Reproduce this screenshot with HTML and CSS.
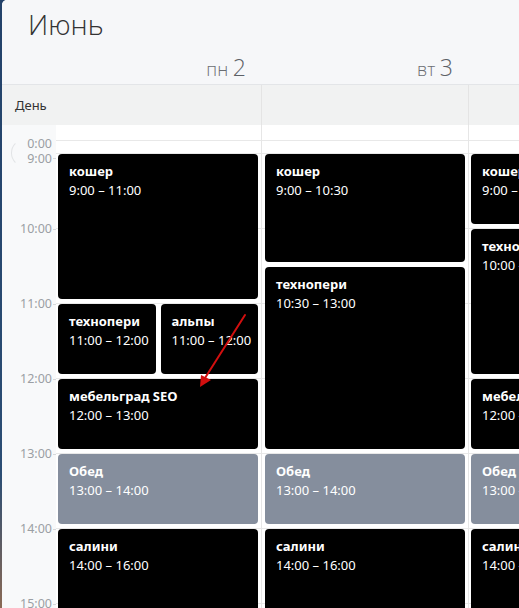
FILE: index.html
```html
<!DOCTYPE html>
<html lang="ru">

<head>
    <meta charset="UTF-8">
    <title>Календарь</title>
    <link rel="stylesheet" href="styles.css">
</head>

<body>
    <div class="app">
        <header class="cal-head">
            <h1 class="month">Июнь</h1>
            <div class="day-heads">
                <div class="head-gutter"></div>
                <div class="day-head">пн <span class="day-num">2</span></div>
                <div class="day-head wide">вт <span class="day-num">3</span></div>
                <div class="day-head"></div>
            </div>
        </header>

        <div class="allday">
            <div class="allday-label">День</div>
            <div class="allday-cell"></div>
            <div class="allday-cell wide"></div>
            <div class="allday-cell"></div>
        </div>

        <div class="grid">
            <div class="gutter">
                <div class="gutter-top">
                    <span class="round-btn"></span>
                    <div class="time">0:00</div>
                    <div class="time">9:00<i class="tick"></i></div>
                </div>
                <div class="hour">10:00<i class="tick"></i></div>
                <div class="hour">11:00<i class="tick"></i></div>
                <div class="hour">12:00<i class="tick"></i></div>
                <div class="hour">13:00<i class="tick"></i></div>
                <div class="hour">14:00<i class="tick"></i></div>
                <div class="hour">15:00<i class="tick"></i></div>
            </div>

            <!-- пн 2 -->
            <div class="day-col">
                <div class="pre"></div>
                <div class="slots">
                    <div class="event" style="grid-row: 1 / 5; grid-column: 1 / 3">
                        <b>кошер</b><span>9:00 – 11:00</span>
                    </div>
                    <div class="event" style="grid-row: 5 / 7; grid-column: 1 / 2">
                        <b>технопери</b><span>11:00 – 12:00</span>
                    </div>
                    <div class="event" style="grid-row: 5 / 7; grid-column: 2 / 3">
                        <b>альпы</b><span>11:00 – 12:00</span>
                    </div>
                    <div class="event" style="grid-row: 7 / 9; grid-column: 1 / 3">
                        <b>мебельград SEO</b><span>12:00 – 13:00</span>
                    </div>
                    <div class="event lunch" style="grid-row: 9 / 11; grid-column: 1 / 3">
                        <b>Обед</b><span>13:00 – 14:00</span>
                    </div>
                    <div class="event" style="grid-row: 11 / 15; grid-column: 1 / 3">
                        <b>салини</b><span>14:00 – 16:00</span>
                    </div>
                </div>
            </div>

            <!-- вт 3 -->
            <div class="day-col wide">
                <div class="pre"></div>
                <div class="slots">
                    <div class="event" style="grid-row: 1 / 4; grid-column: 1 / 3">
                        <b>кошер</b><span>9:00 – 10:30</span>
                    </div>
                    <div class="event" style="grid-row: 4 / 9; grid-column: 1 / 3">
                        <b>технопери</b><span>10:30 – 13:00</span>
                    </div>
                    <div class="event lunch" style="grid-row: 9 / 11; grid-column: 1 / 3">
                        <b>Обед</b><span>13:00 – 14:00</span>
                    </div>
                    <div class="event" style="grid-row: 11 / 15; grid-column: 1 / 3">
                        <b>салини</b><span>14:00 – 16:00</span>
                    </div>
                </div>
            </div>

            <!-- ср 4 -->
            <div class="day-col">
                <div class="pre"></div>
                <div class="slots">
                    <div class="event" style="grid-row: 1 / 3; grid-column: 1 / 3">
                        <b>кошер</b><span>9:00 – 10:00</span>
                    </div>
                    <div class="event" style="grid-row: 3 / 7; grid-column: 1 / 3">
                        <b>технопери</b><span>10:00 – 12:00</span>
                    </div>
                    <div class="event" style="grid-row: 7 / 9; grid-column: 1 / 3">
                        <b>мебельград SEO</b><span>12:00 – 13:00</span>
                    </div>
                    <div class="event lunch" style="grid-row: 9 / 11; grid-column: 1 / 3">
                        <b>Обед</b><span>13:00 – 14:00</span>
                    </div>
                    <div class="event" style="grid-row: 11 / 15; grid-column: 1 / 3">
                        <b>салини</b><span>14:00 – 16:00</span>
                    </div>
                </div>
            </div>
        </div>

        <!-- red annotation arrow -->
        <svg class="arrow" width="519" height="608" viewBox="0 0 519 608">
            <line x1="245" y1="315" x2="205" y2="378" stroke="#d20f0f" stroke-width="2" stroke-linecap="round" />
            <polygon points="200,387 201,375 211,380" fill="#d20f0f" />
        </svg>
    </div>
</body>

</html>
```

FILE: styles.css
```css
/* General styles */
html,
body {
    margin: 0;
    padding: 0;
    height: 100%;
    overflow: hidden;
}

body {
    background: linear-gradient(180deg, #23426a 0%, #2c4e74 78%, #8a6a55 100%);
    font-family: 'Noto Sans', 'Open Sans', sans-serif;
}

.app {
    position: relative;
    margin-left: 2px;
    height: 100%;
    background: #ffffff;
    border-top-left-radius: 5px;
    overflow: hidden;
}

/* Header */
.cal-head {
    background: #f6f7f9;
    height: 85px;
    border-bottom: 1px solid #e3e5e8;
    box-sizing: border-box;
}

.month {
    margin: 0;
    padding: 4px 0 0 26px;
    font-family: 'Open Sans', sans-serif;
    font-size: 28px;
    font-weight: 300;
    line-height: 40px;
    color: #333333;
}

.day-heads {
    display: flex;
    margin-top: 10px;
}

.head-gutter {
    width: 54px;
    flex: none;
}

.day-head {
    width: 206px;
    flex: none;
    box-sizing: border-box;
    padding-right: 16px;
    text-align: right;
    font-family: 'Open Sans', sans-serif;
    font-size: 18px;
    font-weight: 300;
    color: #6a6d72;
    line-height: 26px;
}

.day-num {
    font-size: 23px;
    color: #5c6066;
}

/* All-day row */
.allday {
    display: flex;
    height: 40px;
    background: #f1f2f2;
}

.allday-label {
    width: 54px;
    flex: none;
    padding-left: 13px;
    box-sizing: border-box;
    font-size: 13px;
    line-height: 40px;
    color: #333333;
}

.allday-cell {
    width: 206px;
    flex: none;
    border-right: 1px solid #e4e4e4;
    box-sizing: border-box;
}

/* Time grid */
.grid {
    display: flex;
}

.gutter {
    width: 54px;
    flex: none;
    background: #f8f9fa;
    font-size: 12.5px;
    color: #9b9fa4;
}

.gutter-top {
    position: relative;
    height: 96px;
    padding-top: 11px;
    box-sizing: border-box;
}

.time,
.hour {
    display: flex;
    justify-content: flex-end;
    align-items: center;
    line-height: 15px;
}

.hour {
    height: 75px;
    align-items: flex-start;
}

.tick {
    display: block;
    width: 3px;
    height: 1px;
    margin-left: 1px;
    align-self: center;
    background: #d6d8db;
}

.hour .tick {
    align-self: flex-start;
    margin-top: 8px;
}

.time:first-of-type {
    padding-right: 4px;
}

.round-btn {
    position: absolute;
    left: 9px;
    top: 14px;
    width: 28px;
    height: 28px;
    border-radius: 50%;
    border: 1px solid #e2e4e6;
    border-right-color: transparent;
    border-top-color: transparent;
    border-bottom-color: transparent;
    box-sizing: border-box;
}

.day-col {
    width: 206px;
    flex: none;
    border-right: 1px solid #e6e6e6;
    box-sizing: border-box;
}

.day-head.wide,
.allday-cell.wide,
.day-col.wide {
    width: 207px;
}

.pre {
    height: 15px;
    border-bottom: 1px solid #e8e8e8;
    margin-bottom: 12px;
}

.slots {
    display: grid;
    grid-template-columns: 1fr 1fr;
    grid-template-rows: repeat(14, 37.5px);
    column-gap: 5px;
    padding: 0 3px 0 2px;
    background: repeating-linear-gradient(180deg, #e8e8e8 0, #e8e8e8 1px, transparent 1px, transparent 75px);
}

.wide .slots {
    padding-left: 3px;
}

.event {
    margin: 1px 0 4px;
    border-radius: 4px;
    background: #000000;
    color: #ffffff;
    padding: 8px 11px 0;
    overflow: hidden;
    white-space: nowrap;
    font-size: 13px;
    line-height: 19px;
}

.event b,
.event span {
    display: block;
}

.event b {
    font-weight: 700;
}

.event.lunch {
    background: #858e9d;
}

.arrow {
    position: absolute;
    left: -2px;
    top: 0;
    pointer-events: none;
}
```
